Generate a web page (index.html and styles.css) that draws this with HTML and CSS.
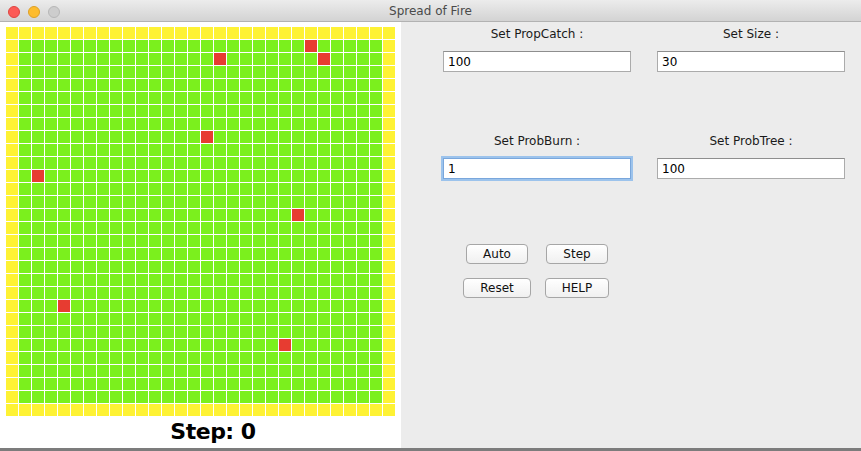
FILE: index.html
```html
<!DOCTYPE html>
<html>
<head>
<meta charset="utf-8">
<title>Spread of Fire</title>
<link rel="stylesheet" href="styles.css">
</head>
<body>
<div class="window">
  <div class="titlebar">
    <div class="lights"><span class="light close"></span><span class="light min"></span><span class="light max"></span></div>
    <div class="title">Spread of Fire</div>
    <div></div>
  </div>
  <div class="content">
    <div class="left">
      <div class="board">
<i></i><i></i><i></i><i></i><i></i><i></i><i></i><i></i><i></i><i></i> <i></i><i></i><i></i><i></i><i></i><i></i><i></i><i></i><i></i><i></i> <i></i><i></i><i></i><i></i><i></i><i></i><i></i><i></i><i></i><i></i>
<i></i><i></i><i></i><i></i><i></i><i></i><i></i><i></i><i></i><i></i> <i></i><i></i><i></i><i></i><i></i><i></i><i></i><i></i><i></i><i></i> <i></i><i></i><i></i><i class="fire"></i><i></i><i></i><i></i><i></i><i></i><i></i>
<i></i><i></i><i></i><i></i><i></i><i></i><i></i><i></i><i></i><i></i> <i></i><i></i><i></i><i></i><i></i><i></i><i class="fire"></i><i></i><i></i><i></i> <i></i><i></i><i></i><i></i><i class="fire"></i><i></i><i></i><i></i><i></i><i></i>
<i></i><i></i><i></i><i></i><i></i><i></i><i></i><i></i><i></i><i></i> <i></i><i></i><i></i><i></i><i></i><i></i><i></i><i></i><i></i><i></i> <i></i><i></i><i></i><i></i><i></i><i></i><i></i><i></i><i></i><i></i>
<i></i><i></i><i></i><i></i><i></i><i></i><i></i><i></i><i></i><i></i> <i></i><i></i><i></i><i></i><i></i><i></i><i></i><i></i><i></i><i></i> <i></i><i></i><i></i><i></i><i></i><i></i><i></i><i></i><i></i><i></i>
<i></i><i></i><i></i><i></i><i></i><i></i><i></i><i></i><i></i><i></i> <i></i><i></i><i></i><i></i><i></i><i></i><i></i><i></i><i></i><i></i> <i></i><i></i><i></i><i></i><i></i><i></i><i></i><i></i><i></i><i></i>
<i></i><i></i><i></i><i></i><i></i><i></i><i></i><i></i><i></i><i></i> <i></i><i></i><i></i><i></i><i></i><i></i><i></i><i></i><i></i><i></i> <i></i><i></i><i></i><i></i><i></i><i></i><i></i><i></i><i></i><i></i>
<i></i><i></i><i></i><i></i><i></i><i></i><i></i><i></i><i></i><i></i> <i></i><i></i><i></i><i></i><i></i><i></i><i></i><i></i><i></i><i></i> <i></i><i></i><i></i><i></i><i></i><i></i><i></i><i></i><i></i><i></i>
<i></i><i></i><i></i><i></i><i></i><i></i><i></i><i></i><i></i><i></i> <i></i><i></i><i></i><i></i><i></i><i class="fire"></i><i></i><i></i><i></i><i></i> <i></i><i></i><i></i><i></i><i></i><i></i><i></i><i></i><i></i><i></i>
<i></i><i></i><i></i><i></i><i></i><i></i><i></i><i></i><i></i><i></i> <i></i><i></i><i></i><i></i><i></i><i></i><i></i><i></i><i></i><i></i> <i></i><i></i><i></i><i></i><i></i><i></i><i></i><i></i><i></i><i></i>
<i></i><i></i><i></i><i></i><i></i><i></i><i></i><i></i><i></i><i></i> <i></i><i></i><i></i><i></i><i></i><i></i><i></i><i></i><i></i><i></i> <i></i><i></i><i></i><i></i><i></i><i></i><i></i><i></i><i></i><i></i>
<i></i><i></i><i class="fire"></i><i></i><i></i><i></i><i></i><i></i><i></i><i></i> <i></i><i></i><i></i><i></i><i></i><i></i><i></i><i></i><i></i><i></i> <i></i><i></i><i></i><i></i><i></i><i></i><i></i><i></i><i></i><i></i>
<i></i><i></i><i></i><i></i><i></i><i></i><i></i><i></i><i></i><i></i> <i></i><i></i><i></i><i></i><i></i><i></i><i></i><i></i><i></i><i></i> <i></i><i></i><i></i><i></i><i></i><i></i><i></i><i></i><i></i><i></i>
<i></i><i></i><i></i><i></i><i></i><i></i><i></i><i></i><i></i><i></i> <i></i><i></i><i></i><i></i><i></i><i></i><i></i><i></i><i></i><i></i> <i></i><i></i><i></i><i></i><i></i><i></i><i></i><i></i><i></i><i></i>
<i></i><i></i><i></i><i></i><i></i><i></i><i></i><i></i><i></i><i></i> <i></i><i></i><i></i><i></i><i></i><i></i><i></i><i></i><i></i><i></i> <i></i><i></i><i class="fire"></i><i></i><i></i><i></i><i></i><i></i><i></i><i></i>
<i></i><i></i><i></i><i></i><i></i><i></i><i></i><i></i><i></i><i></i> <i></i><i></i><i></i><i></i><i></i><i></i><i></i><i></i><i></i><i></i> <i></i><i></i><i></i><i></i><i></i><i></i><i></i><i></i><i></i><i></i>
<i></i><i></i><i></i><i></i><i></i><i></i><i></i><i></i><i></i><i></i> <i></i><i></i><i></i><i></i><i></i><i></i><i></i><i></i><i></i><i></i> <i></i><i></i><i></i><i></i><i></i><i></i><i></i><i></i><i></i><i></i>
<i></i><i></i><i></i><i></i><i></i><i></i><i></i><i></i><i></i><i></i> <i></i><i></i><i></i><i></i><i></i><i></i><i></i><i></i><i></i><i></i> <i></i><i></i><i></i><i></i><i></i><i></i><i></i><i></i><i></i><i></i>
<i></i><i></i><i></i><i></i><i></i><i></i><i></i><i></i><i></i><i></i> <i></i><i></i><i></i><i></i><i></i><i></i><i></i><i></i><i></i><i></i> <i></i><i></i><i></i><i></i><i></i><i></i><i></i><i></i><i></i><i></i>
<i></i><i></i><i></i><i></i><i></i><i></i><i></i><i></i><i></i><i></i> <i></i><i></i><i></i><i></i><i></i><i></i><i></i><i></i><i></i><i></i> <i></i><i></i><i></i><i></i><i></i><i></i><i></i><i></i><i></i><i></i>
<i></i><i></i><i></i><i></i><i></i><i></i><i></i><i></i><i></i><i></i> <i></i><i></i><i></i><i></i><i></i><i></i><i></i><i></i><i></i><i></i> <i></i><i></i><i></i><i></i><i></i><i></i><i></i><i></i><i></i><i></i>
<i></i><i></i><i></i><i></i><i class="fire"></i><i></i><i></i><i></i><i></i><i></i> <i></i><i></i><i></i><i></i><i></i><i></i><i></i><i></i><i></i><i></i> <i></i><i></i><i></i><i></i><i></i><i></i><i></i><i></i><i></i><i></i>
<i></i><i></i><i></i><i></i><i></i><i></i><i></i><i></i><i></i><i></i> <i></i><i></i><i></i><i></i><i></i><i></i><i></i><i></i><i></i><i></i> <i></i><i></i><i></i><i></i><i></i><i></i><i></i><i></i><i></i><i></i>
<i></i><i></i><i></i><i></i><i></i><i></i><i></i><i></i><i></i><i></i> <i></i><i></i><i></i><i></i><i></i><i></i><i></i><i></i><i></i><i></i> <i></i><i></i><i></i><i></i><i></i><i></i><i></i><i></i><i></i><i></i>
<i></i><i></i><i></i><i></i><i></i><i></i><i></i><i></i><i></i><i></i> <i></i><i></i><i></i><i></i><i></i><i></i><i></i><i></i><i></i><i></i> <i></i><i class="fire"></i><i></i><i></i><i></i><i></i><i></i><i></i><i></i><i></i>
<i></i><i></i><i></i><i></i><i></i><i></i><i></i><i></i><i></i><i></i> <i></i><i></i><i></i><i></i><i></i><i></i><i></i><i></i><i></i><i></i> <i></i><i></i><i></i><i></i><i></i><i></i><i></i><i></i><i></i><i></i>
<i></i><i></i><i></i><i></i><i></i><i></i><i></i><i></i><i></i><i></i> <i></i><i></i><i></i><i></i><i></i><i></i><i></i><i></i><i></i><i></i> <i></i><i></i><i></i><i></i><i></i><i></i><i></i><i></i><i></i><i></i>
<i></i><i></i><i></i><i></i><i></i><i></i><i></i><i></i><i></i><i></i> <i></i><i></i><i></i><i></i><i></i><i></i><i></i><i></i><i></i><i></i> <i></i><i></i><i></i><i></i><i></i><i></i><i></i><i></i><i></i><i></i>
<i></i><i></i><i></i><i></i><i></i><i></i><i></i><i></i><i></i><i></i> <i></i><i></i><i></i><i></i><i></i><i></i><i></i><i></i><i></i><i></i> <i></i><i></i><i></i><i></i><i></i><i></i><i></i><i></i><i></i><i></i>
<i></i><i></i><i></i><i></i><i></i><i></i><i></i><i></i><i></i><i></i> <i></i><i></i><i></i><i></i><i></i><i></i><i></i><i></i><i></i><i></i> <i></i><i></i><i></i><i></i><i></i><i></i><i></i><i></i><i></i><i></i>
      </div>
      <div class="step">Step: 0</div>
    </div>
    <div class="right">
      <div class="fields">
        <div class="field"><label>Set PropCatch :</label><input type="text" value="100"></div>
        <div class="field"><label>Set Size :</label><input type="text" value="30"></div>
        <div class="field"><label>Set ProbBurn :</label><input type="text" class="focused" value="1"></div>
        <div class="field"><label>Set ProbTree :</label><input type="text" value="100"></div>
      </div>
      <div class="buttons">
        <button class="btn">Auto</button>
        <button class="btn">Step</button>
        <button class="btn">Reset</button>
        <button class="btn">HELP</button>
      </div>
    </div>
  </div>
  <div class="bottom"></div>
</div>
</body>
</html>
```

FILE: styles.css
```css
* { box-sizing: border-box; }
html, body { margin: 0; padding: 0; }
body {
  width: 861px;
  height: 451px;
  overflow: hidden;
  background: #ececec;
  font-family: "DejaVu Sans", sans-serif;
  color: #1a1a1a;
}
.window { display: flex; flex-direction: column; height: 451px; }

.titlebar {
  height: 22px;
  flex: none;
  display: grid;
  grid-template-columns: 1fr auto 1fr;
  align-items: start;
  background: linear-gradient(#ececec, #d3d3d3);
  border-bottom: 1px solid #b2b2b2;
}
.lights { display: flex; gap: 8px; padding: 6px 0 0 8px; }
.light { width: 12px; height: 12px; border-radius: 50%; }
.close { background: #fc5b57; border: 1px solid #de4541; }
.min { background: #fdbc2e; border: 1px solid #dea025; }
.max { background: #cdcdcd; border: 1px solid #b7b7b7; }
.title { font-size: 12px; line-height: 14px; padding-top: 4px; color: #4a4a4a; }

.content { flex: 1; display: flex; }
.left { width: 401px; flex: none; background: #fff; padding: 5px 0 0 6px; }
.board {
  display: grid;
  grid-template-columns: repeat(30, 12px);
  grid-auto-rows: 12px;
  gap: 1px;
  width: 389px;
}
.board i { display: block; background: #7bf01d; }
.board i:nth-child(30n+1),
.board i:nth-child(30n),
.board i:nth-child(-n+30),
.board i:nth-child(n+871) { background: #fef234; }
.board i.fire { background: #e73c31; }

.step {
  margin-top: 3px;
  padding-left: 19px;
  text-align: center;
  font-weight: bold;
  font-size: 22px;
  line-height: 26px;
  letter-spacing: -0.5px;
  color: #000;
}

.right { flex: 1; padding: 5px 0 0 42px; }
.fields {
  display: grid;
  grid-template-columns: 188px 188px;
  column-gap: 26px;
  row-gap: 62px;
}
.field { display: flex; flex-direction: column; align-items: center; gap: 9px; }
.field label { font-size: 12px; line-height: 15px; color: #1a1a1a; }
.field input {
  width: 188px;
  height: 21px;
  margin: 0;
  padding: 0 0 0 4px;
  border: 1px solid #ababab;
  border-top-color: #8e8e8e;
  background: #fff;
  font: 12px "DejaVu Sans", sans-serif;
  color: #000;
  outline: none;
}
.field input.focused {
  border-color: #7aa7dc;
  box-shadow: 0 0 0 2px #9cc3ec;
}

.buttons {
  display: grid;
  grid-template-columns: 80px 80px;
  grid-auto-rows: 20px;
  row-gap: 14px;
  justify-items: center;
  width: 160px;
  margin: 65px 0 0 14px;
}
.btn {
  height: 20px;
  margin: 0;
  padding: 0 16px;
  border: 1px solid #a6a6a6;
  border-radius: 4px;
  background: linear-gradient(#ffffff, #f0f0f0);
  font: 12px "DejaVu Sans", sans-serif;
  color: #111;
}

.bottom { height: 3px; flex: none; background: #7c7c7c; }
```
